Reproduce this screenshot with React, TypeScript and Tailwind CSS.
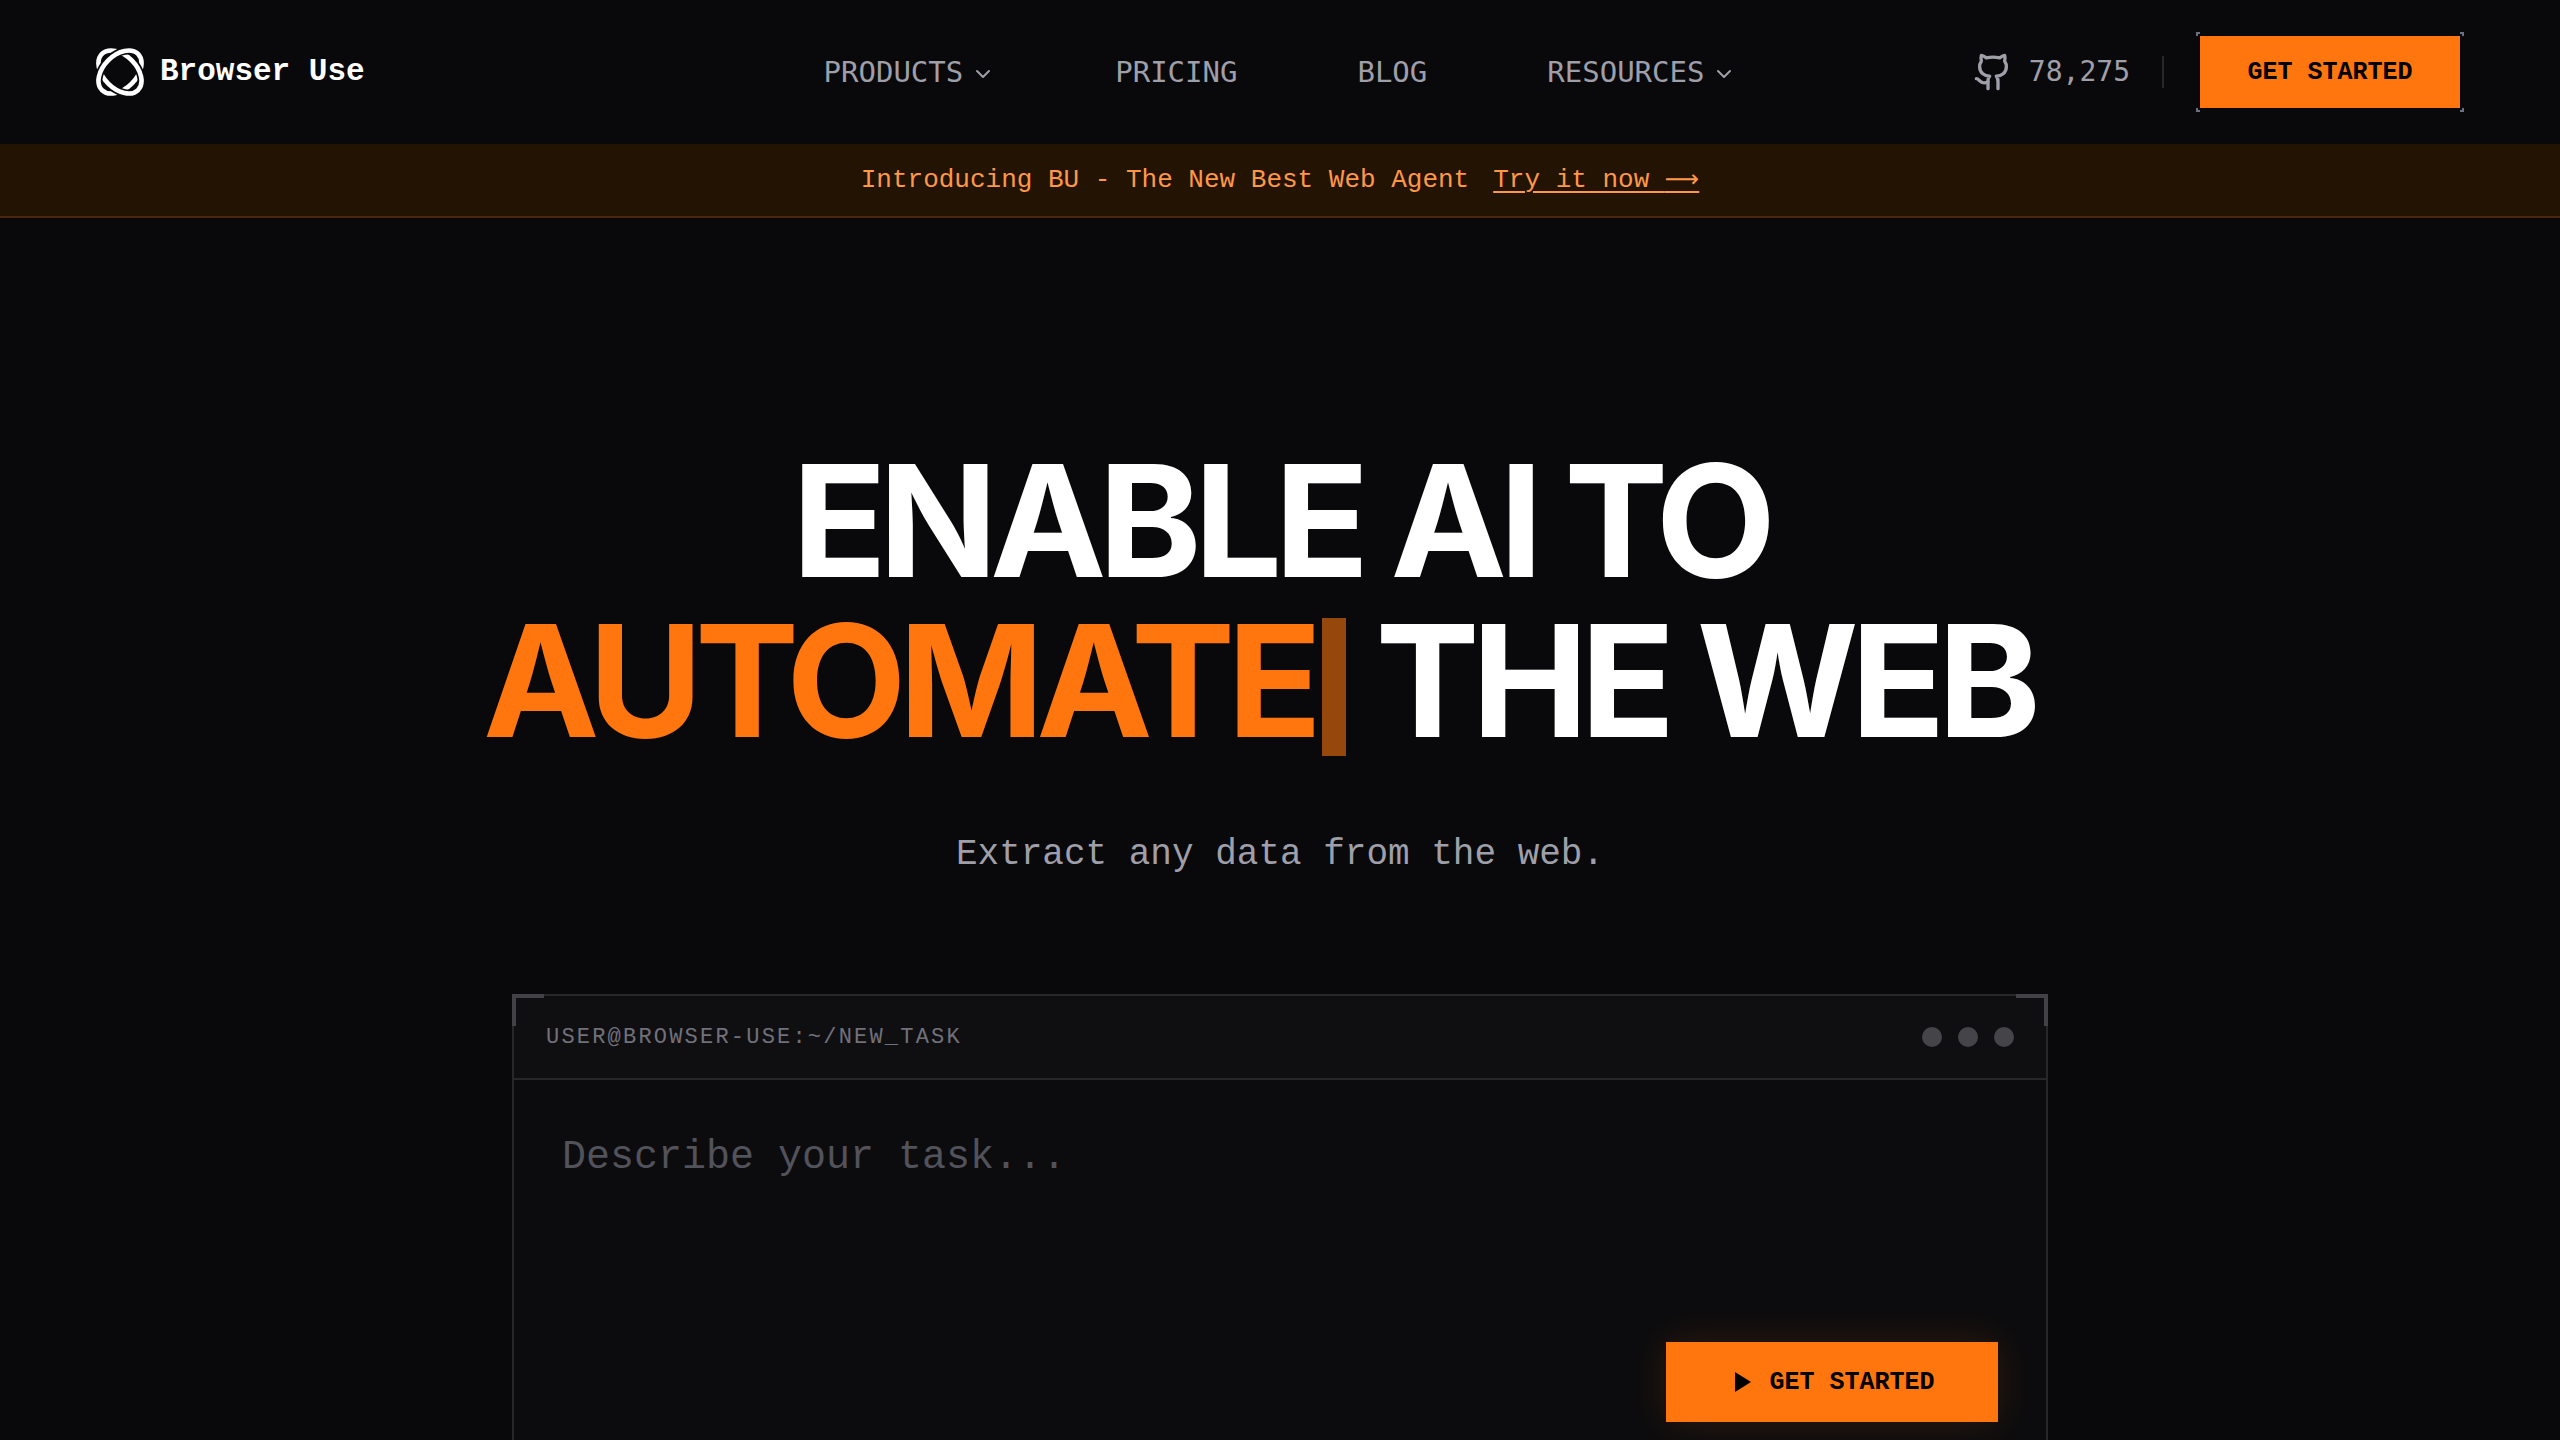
import React from "react";
import { Github } from "lucide-react";

function Logo() {
  return (
    <svg viewBox="0 0 48 48" className="size-12" fill="none" aria-hidden="true">
      <defs>
        <clipPath id="upper-left">
          <path d="M0 0H48L0 48Z" />
        </clipPath>
        <clipPath id="lower-right">
          <path d="M48 48H0L48 0Z" />
        </clipPath>
        <mask id="cut-falling" maskUnits="userSpaceOnUse" x="0" y="0" width="48" height="48">
          <rect width="48" height="48" fill="white" />
          <g clipPath="url(#upper-left)">
            <ellipse cx="24" cy="24" rx="25.5" ry="16.6" transform="rotate(-45 24 24)" stroke="black" strokeWidth="8" />
          </g>
        </mask>
        <mask id="cut-rising" maskUnits="userSpaceOnUse" x="0" y="0" width="48" height="48">
          <rect width="48" height="48" fill="white" />
          <g clipPath="url(#lower-right)">
            <ellipse cx="24" cy="24" rx="25.5" ry="16.6" transform="rotate(45 24 24)" stroke="black" strokeWidth="8" />
          </g>
        </mask>
      </defs>
      <g stroke="white" strokeWidth="4.6">
        <g mask="url(#cut-falling)">
          <ellipse cx="24" cy="24" rx="25.5" ry="16.6" transform="rotate(45 24 24)" />
        </g>
        <g mask="url(#cut-rising)">
          <ellipse cx="24" cy="24" rx="25.5" ry="16.6" transform="rotate(-45 24 24)" />
        </g>
      </g>
    </svg>
  );
}

function Chevron() {
  return (
    <svg
      viewBox="0 0 24 24"
      className="mt-0.5 size-6"
      fill="none"
      stroke="currentColor"
      strokeWidth="2"
      strokeLinecap="round"
      strokeLinejoin="round"
      aria-hidden="true"
    >
      <path d="m6 9 6 6 6-6" />
    </svg>
  );
}

function Header() {
  return (
    <header className="grid h-36 shrink-0 grid-cols-[1fr_auto_1fr] items-center px-24">
      <a href="#home" className="flex items-center gap-4 text-[31px] font-bold text-white">
        <Logo />
        Browser Use
      </a>
      <nav className="flex items-center gap-[120px] pt-0.5 font-['DejaVu_Sans_Mono',monospace] text-[29px] text-[#9f9fa9]">
        <button type="button" className="flex items-center gap-2">
          PRODUCTS
          <Chevron />
        </button>
        <a href="#pricing">PRICING</a>
        <a href="#blog">BLOG</a>
        <button type="button" className="flex items-center gap-2">
          RESOURCES
          <Chevron />
        </button>
      </nav>
      <div className="flex items-center justify-end gap-8">
        <a
          href="#github"
          className="flex items-center gap-4 font-['DejaVu_Sans_Mono',monospace] text-[28px] text-[#9f9fa9]"
        >
          <Github className="size-10" strokeWidth={2} aria-hidden="true" />
          78,275
        </a>
        <span className="h-8 w-0.5 bg-[#27272a]" />
        <div className="relative p-1">
          <span className="absolute top-0 left-0 size-1 border-t-2 border-l-2 border-gray-500" />
          <span className="absolute top-0 right-0 size-1 border-t-2 border-r-2 border-gray-500" />
          <span className="absolute bottom-0 left-0 size-1 border-b-2 border-l-2 border-gray-500" />
          <span className="absolute right-0 bottom-0 size-1 border-r-2 border-b-2 border-gray-500" />
          <button type="button" className="h-18 w-[260px] bg-[#ff750e] pt-0.5 text-[25px] font-bold text-black">
            GET STARTED
          </button>
        </div>
      </div>
    </header>
  );
}

function Announcement() {
  return (
    <div className="flex h-[74px] shrink-0 items-center justify-center gap-6 border-b-2 border-[#4a260a] bg-[#221303] text-[26px] text-[#ff9748]">
      <span>Introducing BU - The New Best Web Agent</span>
      <a href="#try" className="underline decoration-2 underline-offset-4">
        Try it now <span className="font-['DejaVu_Sans',sans-serif] text-[24px]">⟶</span>
      </a>
    </div>
  );
}

function TaskCard() {
  return (
    <form className="relative mx-auto mt-[112px] w-full max-w-[1536px] border-2 border-[#27272a] bg-[#0c0c0e]">
      <span className="absolute -top-0.5 -left-0.5 size-8 border-t-4 border-l-4 border-[#424246]" />
      <span className="absolute -top-0.5 -right-0.5 size-8 border-t-4 border-r-4 border-[#424246]" />
      <div className="flex h-[84px] items-center justify-between border-b-2 border-[#27272a] bg-[#0f0f11] px-8">
        <label htmlFor="task" className="text-[22px] tracking-widest text-[#71717b]">
          USER@BROWSER-USE:~/NEW_TASK
        </label>
        <div className="flex gap-4">
          <span className="size-5 rounded-full bg-[#454449]" />
          <span className="size-5 rounded-full bg-[#454449]" />
          <span className="size-5 rounded-full bg-[#454449]" />
        </div>
      </div>
      <div className="flex flex-col px-12 pt-12 pb-12">
        <textarea
          id="task"
          placeholder="Describe your task..."
          className="h-[214px] w-full resize-none bg-transparent text-[40px] leading-[60px] text-white outline-none placeholder:text-[#52525b]"
        />
        <button
          type="button"
          className="flex h-20 w-[332px] items-center justify-center gap-4 self-end bg-[#ff750e] text-[25px] font-bold text-black shadow-[0_0_40px_rgba(255,117,14,0.15)]"
        >
          <svg viewBox="0 0 24 24" className="size-6" fill="currentColor" aria-hidden="true">
            <path d="M6 2v20l16-10z" />
          </svg>
          <span className="pt-0.5">GET STARTED</span>
        </button>
      </div>
    </form>
  );
}

export default function App() {
  return (
    <div className="flex h-screen flex-col overflow-hidden bg-[#09090b] font-['Liberation_Mono',monospace]">
      <Header />
      <Announcement />
      <main className="px-24 pt-[223px]">
        <h1 className="text-center font-['Inter',sans-serif] text-[156px] leading-[160px] font-bold tracking-tighter text-white">
          <span className="block">ENABLE AI TO</span>
          <span className="flex items-center justify-center whitespace-pre pr-11">
            <span className="text-[#ff750e]">AUTOMATE</span>
            <span className="mt-3 ml-2 h-[138px] w-6 bg-[#96480c]" />
            <span> THE WEB</span>
          </span>
        </h1>
        <p className="mt-[67px] text-center text-[36px] leading-[54px] text-[#9f9fa9]">
          Extract any data from the web.
        </p>
        <TaskCard />
      </main>
    </div>
  );
}
